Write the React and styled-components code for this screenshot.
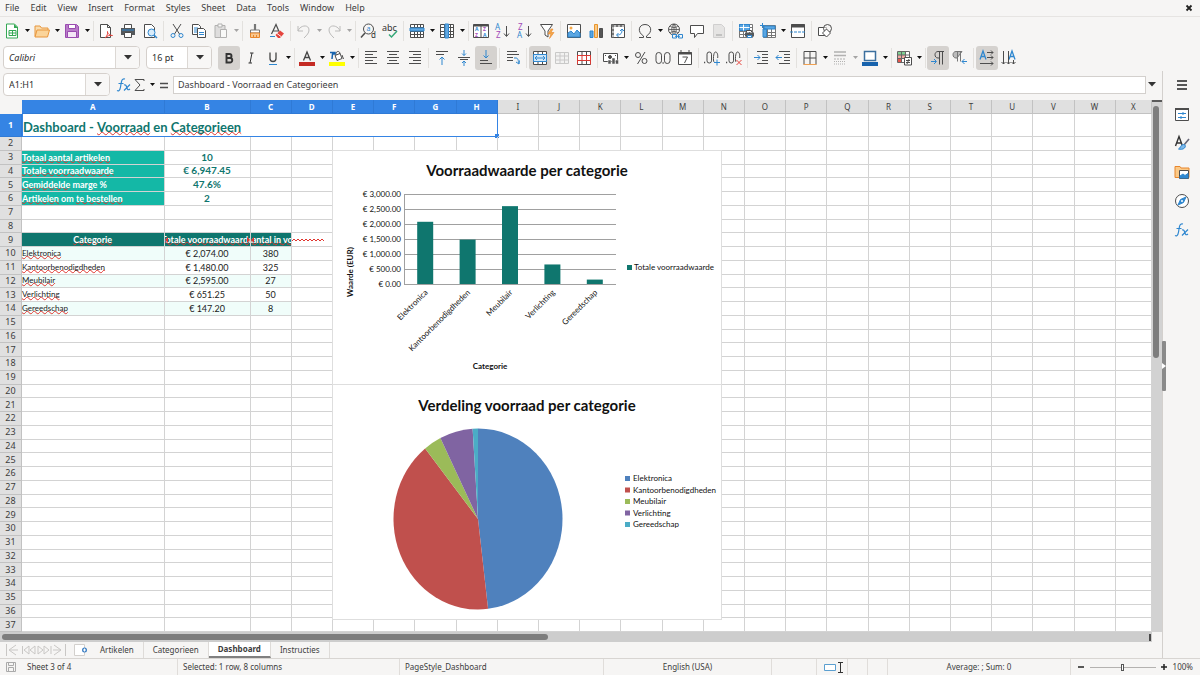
import React from "react";
import styled, { createGlobalStyle, css } from "styled-components";

const UI_FONT = '"Noto Sans", "Open Sans", sans-serif';
const CELL_FONT = 'Lato, "Open Sans", sans-serif';
const BLUE = "#3584e4";
const TEAL = "#0f766e";
const INK = "#3d3d3d";

const GlobalStyle = createGlobalStyle`
  *, *::before, *::after { box-sizing: border-box; }
  body { margin: 0; background: #f6f5f4; }
  button, input { font: inherit; color: inherit; margin: 0; padding: 0; border: 0; background: none; }
`;

const App$ = styled.div`
  display: flex;
  flex-direction: column;
  height: 100vh;
  overflow: hidden;
  background: #f6f5f4;
  color: ${INK};
  font: 9px/12px ${UI_FONT};
`;

/* ---------- menu bar ---------- */
const MenuBar = styled.nav`
  display: flex;
  align-items: center;
  height: 17px;
  flex: none;
  border-bottom: 1px solid #e6e4e2;
`;
const MenuItem = styled.button`
  padding: 0 6px 0 5px;
`;
const CloseButton = styled.button`
  display: flex;
  margin-left: auto;
  padding: 0 6px;
`;

/* ---------- toolbars ---------- */
const Toolbar = styled.div`
  display: flex;
  align-items: center;
  height: 27px;
  flex: none;
  padding-left: ${(p) => p.$inset || 1}px;
`;
const Tool = styled.button`
  display: flex;
  align-items: center;
  justify-content: center;
  flex: none;
  width: ${(p) => (p.$narrow ? 16 : 22)}px;
  height: 24px;
  border-radius: 3px;
  background: ${(p) => (p.$active ? "#d5d2cf" : "transparent")};
  opacity: ${(p) => (p.disabled ? 0.4 : 1)};
`;
const ArrowButton = styled.button`
  display: flex;
  align-items: center;
  justify-content: center;
  flex: none;
  width: 8px;
  height: 24px;
  opacity: ${(p) => (p.disabled ? 0.35 : 1)};
`;
const Separator = styled.span`
  flex: none;
  width: 5px;
  height: 20px;
  background: linear-gradient(#e3e1de, #e3e1de) center / 1px 100% no-repeat;
  ${ArrowButton} + & { width: 4px; }
`;
const Combo = styled.div`
  display: flex;
  flex: none;
  width: ${(p) => p.$width}px;
  height: 23px;
  margin-right: 6px;
  border: 1px solid #d5d0cc;
  border-radius: 4px;
  background: #fff;
  overflow: hidden;
`;
const ComboInput = styled.input`
  flex: 1;
  min-width: 0;
  padding-left: 5px;
  color: #2e2e2e;
  font-style: ${(p) => (p.$italic ? "italic" : "normal")};
`;
const ComboButton = styled.button`
  display: flex;
  align-items: center;
  justify-content: center;
  width: 24px;
  border-left: 1px solid #dcd8d4;
  background: #f8f7f6;
`;

/* ---------- body ---------- */
const Body = styled.div`
  display: flex;
  flex: 1;
  min-height: 0;
`;
const Main = styled.main`
  display: flex;
  flex-direction: column;
  flex: 1;
  min-width: 0;
`;
const FormulaBar = styled.div`
  display: flex;
  align-items: center;
  flex: none;
  height: 29px;
  padding: 0 6px 2px 3px;
`;
const FormulaInput = styled.input`
  flex: 1;
  min-width: 0;
  height: 18px;
  margin: 0 2px 0 1px;
  padding-left: 4px;
  border: 1px solid #d3d0cd;
  background: #fff;
`;
const SheetArea = styled.div`
  display: grid;
  grid-template: minmax(0, 1fr) 10px / minmax(0, 1fr) 10px;
  flex: 1;
  min-height: 0;
`;
const SheetPane = styled.div`
  position: relative;
  overflow: hidden;
  background: #fff;
`;
const VScroll = styled.div`
  padding: 4px 3px 0 1px;
  background: #d2d2d2;
  border-top: 2px solid #5a5a5a;
`;
const VThumb = styled.div`
  width: 6px;
  height: 48%;
  border-radius: 3px;
  background: #7d7d7d;
`;
const HScroll = styled.div`
  display: flex;
  align-items: center;
  justify-content: space-between;
  padding: 0 1px 0 2px;
  background: #cdcdcd;
`;
const HThumb = styled.div`
  width: 47.5%;
  height: 6px;
  border-radius: 3px;
  background: #7d7d7d;
`;
const ScrollMark = styled.div`
  width: 2px;
  height: 7px;
  background: #4a4a4a;
`;

/* ---------- spreadsheet grid ---------- */
const Table = styled.table`
  display: grid;
  grid-template-rows: 14px minmax(0, 1fr);
  height: 100%;
`;
const Head = styled.thead`
  display: grid;
`;
const Rows = styled.tbody`
  display: grid;
  min-height: 0;
  grid-template-rows: 23px repeat(36, minmax(0, 1fr));
`;
const Row = styled.tr`
  display: grid;
  min-height: 0;
  grid-template-columns: 22px 1425fr 860fr repeat(21, 412fr) 363fr;
`;
const HeaderCell = styled.th`
  display: flex;
  align-items: center;
  justify-content: center;
  min-width: 0;
  padding: 0;
  overflow: hidden;
  border-right: 1px solid #c2c2c2;
  border-bottom: 1px solid #c2c2c2;
  background: #e0e0e0;
  font-size: ${(p) => (p.$row ? 9 : 8)}px;
  line-height: 10px;
  font-weight: 400;
  ${(p) => p.$active && css`
    background: ${BLUE};
    border-color: #2f7ad6;
    color: #fff;
    font-weight: 700;
  `}
`;
const Corner = styled.td`
  background: #f6f5f4;
`;
const looks = {
  label: css`background: #14b8a6; color: #fff; font-weight: 700; font-size: 9px;`,
  metric: css`color: ${TEAL}; font-weight: 700; font-size: 10px; justify-content: center;`,
  heading: css`background: ${TEAL}; color: #fff; font-weight: 700; justify-content: center; overflow: hidden;`,
  overflow: css`background: ${TEAL}; color: #fff; font-weight: 700; text-indent: -5px; overflow: hidden;`,
  name: css`font-size: 8px;`,
};
const Cell = styled.td`
  position: relative;
  display: flex;
  align-items: center;
  min-width: 0;
  min-height: 0;
  padding: 0;
  border-right: 1px solid #d3d3d3;
  border-bottom: 1px solid #d3d3d3;
  color: #1a1a1a;
  font: 9px/11px ${CELL_FONT};
  white-space: nowrap;
  ${(p) => p.$band && css`background: #f0fdfa;`}
  ${(p) => p.$center && css`justify-content: center;`}
  ${(p) => p.$look && looks[p.$look]}
`;
const TitleCell = styled(Cell)`
  grid-column: span 8;
  border: solid ${BLUE};
  border-width: 0 1px 1px;
  color: ${TEAL};
  font: 700 13px/16px ${CELL_FONT};
  padding-top: 4px;
  white-space: pre;
`;
const FillHandle = styled.span`
  position: absolute;
  right: -2px;
  bottom: -2px;
  width: 4px;
  height: 4px;
  background: ${BLUE};
`;
const Misspelt = styled.span`
  text-decoration: underline wavy #e0352f 1px;
  text-underline-offset: ${(p) => (p.$tight ? -2 : -1)}px;
  text-decoration-skip-ink: none;
`;
const Clip = styled.span`
  position: absolute;
  top: 4px;
  ${(p) => (p.$right ? "right: 0;" : "left: 0;")}
  border: 3px solid transparent;
  border-width: 3px ${(p) => (p.$right ? 0 : 3)}px 3px ${(p) => (p.$right ? 3 : 0)}px;
  border-${(p) => (p.$right ? "left" : "right")}-color: #e0352f;
`;
const Charts = styled.div`
  position: absolute;
  left: 333px;
  top: 51px;
  display: flex;
  flex-direction: column;
`;
const ChartSvg = styled.svg`
  display: block;
  background: #fff;
  outline: 1px solid #dedede;
  font-family: ${CELL_FONT};
  font-size: 8px;
  fill: #111;
`;

/* ---------- sheet tabs, sidebar, status ---------- */
const TabBar = styled.div`
  display: flex;
  align-items: stretch;
  flex: none;
  height: 16px;
  font-size: 8px;
`;
const TabTools = styled.div`
  display: flex;
  align-items: center;
  gap: 6px;
  width: 91px;
  padding-left: 5px;
`;
const TabButton = styled.button`
  padding: 0 9px;
  line-height: 14px;
  border-right: 1px solid #dedbd8;
  ${(p) => p.$active && css`
    background: #fff;
    border-bottom: 2px solid #808080;
    font-weight: 700;
  `}
`;
const Sidebar = styled.aside`
  position: relative;
  display: flex;
  flex-direction: column;
  align-items: center;
  gap: 5px;
  flex: none;
  width: 38px;
  padding-top: 2px;
  border-left: 1px solid #d3d0cd;
`;
const Splitter = styled.div`
  position: absolute;
  left: -1px;
  top: 46%;
  display: flex;
  align-items: center;
  justify-content: center;
  width: 4px;
  height: 50px;
  border-radius: 1px;
  background: #8a8a8a;
`;
const StatusBar = styled.footer`
  display: grid;
  grid-template-columns: 22px 156fr 222fr 204fr 168fr 45fr 31px 20px 20px 183fr 129px;
  flex: none;
  height: 17px;
  border-top: 1px solid #d8d5d2;
  font-size: 8px;
`;
const StatusField = styled.div`
  display: flex;
  align-items: center;
  justify-content: ${(p) => (p.$center ? "center" : "flex-start")};
  padding-left: ${(p) => (p.$center ? 0 : 5)}px;
  border-right: 1px solid ${(p) => (p.$plain ? "transparent" : "#e0ddda")};
`;
const ZoomField = styled.div`
  display: flex;
  align-items: center;
  justify-content: space-between;
  padding: 0 7px 0 6px;
`;
const ZoomButton = styled.button`
  display: flex;
`;
const ZoomSlider = styled.input`
  appearance: none;
  width: 66px;
  height: 12px;
  background: linear-gradient(#b4b2b0, #b4b2b0) center / 100% 1px no-repeat;
  &::-webkit-slider-thumb {
    appearance: none;
    width: 3px;
    height: 7px;
    border: 1px solid #555;
    background: #fff;
  }
`;

/* ---------- icons ---------- */
const IconSvg = styled.svg`
  display: block;
  overflow: visible;
  font-family: ${UI_FONT};
`;
const Svg = ({ w = 16, h = 16, children }) => (
  <IconSvg width={w} height={h} viewBox={`0 0 ${w} ${h}`} fill="none" stroke="#4d4d4d" strokeWidth="1" aria-hidden="true">
    {children}
  </IconSvg>
);
const Caret = ({ big }) =>
  big ? (
    <svg width="8" height="5" viewBox="0 0 8 5" aria-hidden="true"><path d="M0 0h8L4 4.5z" fill="#333" /></svg>
  ) : (
    <svg width="5" height="3" viewBox="0 0 5 3" aria-hidden="true"><path d="M0 0h5L2.5 3z" fill="#111" /></svg>
  );

const B = "#2f87cf";
const PURPLE = "#a24bb8";
const lines = (rows, extra) => (
  <Svg>
    {rows.map(([x, y, w], i) => <path key={i} d={`M${x} ${y}.5h${w}`} />)}
    {extra}
  </Svg>
);
const gridPath = "M1.5 1.5h13v13h-13zM1.5 4.5h13M1.5 8.5h13M1.5 11.5h13M5.5 1.5v13M8.5 1.5v13M11.5 1.5v13";

const icons = {
  new: <Svg><path d="M2.500 1h8l3 3v11h-11z" fill="#fff" stroke="#35a854" /><path d="M10 1v4h4z" fill="#35a854" stroke="none" /><path d="M5 7.500h7v5H5zM5 10h7M8.500 7.500v5" stroke="#35a854" /></Svg>,
  open: <Svg><path d="M1 13.500V3h5l1.500 2H14v2" fill="#f9dcae" stroke="#e8963c" /><path d="M1 14l2-7h12.500l-2 7z" fill="#fbd49a" stroke="#e8963c" /></Svg>,
  save: <Svg><path d="M1.500 1.500h11l2 2v11h-13z" fill="#b97cc9" stroke="#9a4bb0" /><path d="M4.500 1.500h7v4h-7z" fill="#fff" stroke="#9a4bb0" /><path d="M3.500 8.500h9v6h-9z" fill="#f4e6f7" stroke="#9a4bb0" /></Svg>,
  pdf: <Svg><path d="M2.500 1.500h7l3 3v10h-10z" fill="#fff" /><path d="M9.500 1.500v3h3" /><path d="M7 15c2-2 3-4 2.500-6.500C9 10 12 13 14.500 12.500 12 11.500 9 13 7 15z" stroke="#e5443d" /></Svg>,
  print: <Svg><path d="M4.500 5V1.500h7V5" fill="#fff" /><path d="M1 5h14v7H1z" fill="#55595c" stroke="none" /><path d="M2 7h12" stroke={B} /><path d="M4.500 9.500h7v5h-7z" fill="#fff" /></Svg>,
  preview: <Svg><path d="M2.500 1.500h7l3 3v10h-10z" fill="#fff" /><circle cx="9.500" cy="9.500" r="3.500" fill="#d9ecfa" stroke={B} /><path d="M12 12l3 3" stroke={B} strokeWidth="1.500" /></Svg>,
  cut: <Svg><path d="M4 1l6.500 10M12 1L5.500 11" /><circle cx="4" cy="12.500" r="2" stroke={B} /><circle cx="12" cy="12.500" r="2" stroke={B} /></Svg>,
  copy: <Svg><path d="M1.500 1.500h6l2 2v8h-8z" fill="#fff" /><path d="M3 5h4M3 7h3M3 9h3" stroke={B} /><path d="M6.500 5.500h6l2 2v7h-8z" fill="#fff" /><path d="M8 9.500h5M8 11.500h5" stroke={B} /></Svg>,
  paste: <Svg><path d="M2 2.500h10v12H2z" fill="#bbb" /><path d="M5 1h4v3H5z" fill="#fff" /><path d="M7.500 6.500h6v8h-6z" fill="#fff" /></Svg>,
  brush: <Svg><path d="M8 1v6" strokeWidth="2.200" stroke="#777" /><path d="M3.500 7h9v3h-9z" fill="#fff" stroke="#777" /><path d="M3.500 10h9v4.500h-9zM6.500 12v2.500M9.500 12v2.500" fill="#f9c890" stroke="#e8862c" /></Svg>,
  clear: <Svg><path d="M2.500 11L7 1.500l3 7M4 8h5.500" strokeWidth="1.200" /><path d="M1 13.500h5" stroke={B} /><path d="M6.500 12l4.500-4.500 4 3-4 4.500H9z" fill="#e5443d" stroke="none" /><path d="M8 10.500l4 3" stroke="#f6f5f4" /></Svg>,
  undo: <Svg><path d="M2 3v5h5M2 8c2-6 11-7 11-1 0 3-2 5-5 8" stroke="#666" /></Svg>,
  redo: <Svg><path d="M14 3v5H9M14 8C12 2 3 1 3 7c0 3 2 5 5 8" stroke="#666" /></Svg>,
  find: <Svg><circle cx="8.500" cy="6" r="5" /><path d="M5 10l-4 4.500" strokeWidth="1.500" /><text x="6.500" y="8" fontSize="7" fill={B} stroke="none">a</text><text x="11" y="15" fontSize="8" fill="#333" stroke="none">d</text></Svg>,
  spell: <Svg><text x="0" y="8" fontSize="9" fill="#333" stroke="none">abc</text><path d="M7 11.500l2.500 2.500L15 8" stroke="#35a878" strokeWidth="1.500" /></Svg>,
  row: <Svg><path d={gridPath} fill="#fff" /><path d="M1 5h14v3H1z" fill="#62a8e0" stroke={B} /></Svg>,
  column: <Svg><path d={gridPath} fill="#fff" /><path d="M6 1h3.500v14H6z" fill="#62a8e0" stroke={B} /></Svg>,
  sort: <Svg><path d="M.500 1.500h15v13H.500zM8 1.500v13" fill="#fff" /><path d="M.500 2.500h15" strokeWidth="2" /><g fontSize="5" stroke="none" fontWeight="700"><text x="2" y="8" fill={B}>A</text><text x="2" y="14" fill={PURPLE}>Z</text><text x="10" y="8" fill={PURPLE}>Z</text><text x="10" y="14" fill={B}>A</text></g></Svg>,
  asc: <Svg><g fontSize="8" stroke="none"><text x="0" y="7" fill={B}>A</text><text x="1" y="15" fill={PURPLE}>Z</text></g><path d="M11.500 3v10M9 10.500l2.500 3 2.500-3" /></Svg>,
  desc: <Svg><g fontSize="8" stroke="none"><text x="1" y="7" fill={PURPLE}>Z</text><text x="0" y="15" fill={B}>A</text></g><path d="M11.500 3v10M9 10.500l2.500 3 2.500-3" /></Svg>,
  filter: <Svg><path d="M1.500 1.500h12L9 8v6l-3-2V8z" fill="#fff" /><path d="M12 6l-3 5h3l-1.500 4.500L15 9.500h-3L14 6z" fill="#f6a94a" stroke="#e8862c" strokeWidth=".6" /></Svg>,
  image: <Svg><path d="M1.500 1.500h13v13h-13z" fill="#fff" /><path d="M2 14v-4l3-2 3 3 3-4 3 3v4z" fill="#5aa6e2" stroke={B} /><circle cx="5" cy="5" r="1.500" fill="#f6a94a" stroke="none" /></Svg>,
  chart: <Svg><path d="M2 8h3v6.500H2z" fill="#5aa6e2" stroke={B} /><path d="M6.500 1.500h3v13h-3z" fill="#fbc987" stroke="#e8962c" /><path d="M11.500 5.500h3v9h-3z" fill="#555" /></Svg>,
  pivot: <Svg><path d="M1.500 1.500h13v13h-13z" fill="#fff" /><path d="M1.500 3h13M3 1.500v13" stroke="#777" strokeWidth="2" strokeDasharray="3 1" /><path d="M7 12c4 0 5-2 5-5M10 8l2-2 2 2M8.500 10L6.500 12l2 2" stroke={B} /></Svg>,
  omega: <Svg><path d="M2 14.500h4.500v-1.500C0 9 1.500 1.500 8 1.500S16 9 9.500 13v1.500H14" /></Svg>,
  link: <Svg><circle cx="7" cy="6.500" r="5.500" /><path d="M1.500 6.500h11M7 1v11M3 3c2 2 6 2 8 0M3 10c2-2 6-2 8 0M7 1c-3 3-3 8 0 11M7 1c3 3 3 8 0 11" strokeWidth=".8" /><path d="M5.500 11.500h4v3.500h-4zM11.500 11.500h4v3.500h-4zM8 13.300h5" fill="#f6f5f4" stroke={B} /></Svg>,
  comment: <Svg><path d="M1.500 2.500h13v8H8.500l-3 4v-4h-4z" fill="#fff" /></Svg>,
  headfoot: <Svg><path d="M2.500 1.500h8l3 3v10h-11z" fill="#ccc" stroke="#999" /><path d="M5 12h6" stroke="#777" strokeWidth="2" /></Svg>,
  printarea: <Svg><path d={gridPath} fill="#fff" stroke="#777" /><path d="M1.500 1.500h10v6h-10z" fill="#5aa6e2" stroke={B} /><path d="M1.500 4.500h10M5.500 1.500v6" stroke="#fff" /><path d="M8.500 9V7.500h5V9" fill="#fff" /><path d="M7 9.500h9v4H7z" fill="#55595c" stroke="none" /><path d="M9.500 12.500h4v2h-4z" fill="#fff" stroke={B} /></Svg>,
  freeze: <Svg><path d="M3.500 2.500h12v12h-12zM3.500 9.500h12M3.500 12.500h12M7.500 2.500v12M11.500 2.500v12" fill="#fff" stroke="#777" /><path d="M4 3h11v3H4zM3 6h3.500v8H3z" fill="#5aa6e2" stroke={B} /><path d="M0 2.500h5M2.500 0v5" stroke={B} /></Svg>,
  split: <Svg><path d="M1.500 1.500h13v13h-13z" fill="#fff" /><path d="M1 3h14" strokeWidth="3" /><path d="M0 9h16" stroke={B} strokeDasharray="3 1" /></Svg>,
  shapes: <Svg><path d="M1.500 4.500h8v8h-8z" fill="#fff" /><circle cx="10.500" cy="5.500" r="4" fill="#f6f5f4" fillOpacity=".6" /><path d="M9.500 6l4 4-4 4-4-4z" fill="#fff" /></Svg>,

  bold: <Svg><path d="M5.500 4h3a2 2 0 010 4h-3zM5.500 8h3.500a2.200 2.200 0 010 4.500H5.500z" strokeWidth="1.900" stroke="#333" /></Svg>,
  italic: <Svg><path d="M7 3h3.500M5.500 13H9M9 3l-2 10" stroke="#333" /></Svg>,
  underline: <Svg><path d="M5 2.500v6c0 4 6 4 6 0v-6" strokeWidth="1.300" stroke="#444" /><path d="M4 14.500h8" stroke={B} /></Svg>,
  fontcolor: <Svg><path d="M4.500 10.500L8 2l3.500 8.500M5.500 7.500h5" strokeWidth="1.300" stroke="#444" /><path d="M0 12h16v4H0z" fill="#c42b24" stroke="none" /></Svg>,
  highlight: <Svg><path d="M6 5.500l5-2 2 5-5 2z" fill="#fff" /><path d="M7 5c-1-4 4-5 4-1M13 5l1.500 4" /><path d="M1 2.500h5v1.500H3.500L3 9" stroke="#1763ad" strokeWidth="1.500" /><path d="M0 12h16v4H0z" fill="#ffff00" stroke="none" /></Svg>,
  left: lines([[2, 1, 12], [2, 4, 8], [2, 7, 12], [2, 10, 8], [2, 13, 12]]),
  center: lines([[2, 1, 12], [4, 4, 8], [2, 7, 12], [4, 10, 8], [2, 13, 12]]),
  right: lines([[2, 1, 12], [6, 4, 8], [2, 7, 12], [6, 10, 8], [2, 13, 12]]),
  top: lines([[2, 1, 12], [2, 4, 8]], <path d="M8 15V7M5.500 9.500L8 7l2.500 2.500" stroke={B} />),
  middle: lines([[2, 7, 12], [4, 9, 8]], <path d="M8 0v5.500M6 3.500l2 2 2-2M8 16v-5M6 13l2-2 2 2" stroke={B} />),
  bottom: lines([[2, 10, 8], [2, 13, 12]], <path d="M8 0v8M5.500 5.500L8 8l2.500-2.500" stroke={B} />),
  wrap: lines([[2, 1, 10], [2, 4, 12], [2, 7, 6], [2, 10, 6]], <path d="M9 8h2c3 0 2 5 3 5.500M11 12l3 2 .5-3.500" stroke={B} />),
  merge: <Svg><path d="M1.500 1.500h13v13h-13zM6 1.500v3M10.500 1.500v3M6 11.500v3M10.500 11.500v3" fill="#fff" /><path d="M1.500 4.500h13v7h-13z" fill="#cfe6f8" stroke={B} /><path d="M3 8h10M5 6L3 8l2 2M11 6l2 2-2 2" stroke={B} /></Svg>,
  mergeOnly: <Svg><path d="M1.500 2.500h13v11h-13zM1.500 6h13M1.500 10h13M6 2.500v11M10.500 2.500v11" fill="#eee" stroke="#888" /></Svg>,
  unmerge: <Svg><path d="M1.500 1.500h13v13h-13zM6 1.500v4M10.500 1.500v4M6 11v3.500M10.500 11v3.500" fill="#fff" /><path d="M1.500 5.500h13v5h-13zM6 5.500v5M10.500 5.500v5M1.500 5v9.500M14.500 5v9.500" stroke="#d93a34" /></Svg>,
  currency: <Svg><path d="M.500 3.500h14v8H.500z" fill="#fff" /><circle cx="7" cy="7" r="1.500" fill="#4d4d4d" /><path d="M2 5.500h1M12 5.500h1" /><path d="M5 10h3v4H5zM9 8h3v6H9zM12.500 10h3v4h-3z" fill="#555" stroke="#f6f5f4" strokeWidth=".5" /></Svg>,
  percent: <Svg><circle cx="5" cy="5" r="2.500" /><circle cx="11.500" cy="11" r="2.500" /><path d="M12 2L4.500 14" /></Svg>,
  number: <Svg><rect x="1" y="2.500" width="5.500" height="11" rx="2.700" /><rect x="9.500" y="2.500" width="5.500" height="11" rx="2.700" /><path d="M7.500 13h1.200" strokeWidth="1.300" /></Svg>,
  date: <Svg><path d="M1.500 2.500h13v12h-13z" fill="#fff" /><path d="M1 3.500h14" strokeWidth="2" /><path d="M4 0v3M12 0v3M5.500 7h5L7.500 13" /></Svg>,
  addDec: <Svg><path d="M0 12.500h1.200" strokeWidth="1.300" /><rect x="3" y="2" width="4.500" height="11" rx="2.200" /><path d="M10 12c-1-1-.8-10 1.500-10 2 0 2.500 3 2.200 6" /><path d="M13 9.500v6M10 12.500h6" stroke={B} /></Svg>,
  delDec: <Svg><path d="M0 12.500h1.200" strokeWidth="1.300" /><rect x="3" y="2" width="4.500" height="11" rx="2.200" /><path d="M10 12c-1-1-.8-10 1.500-10 2 0 2.500 3 2.200 6" /><path d="M10.500 10l5 5M15.500 10l-5 5" stroke="#e5443d" /></Svg>,
  indent: lines([[4, 1, 11], [9, 4, 6], [9, 7, 6], [9, 10, 6], [4, 13, 11]], <path d="M1 7.500h6M4.500 5L7 7.500 4.500 10" stroke={B} />),
  outdent: lines([[4, 1, 11], [9, 4, 6], [9, 7, 6], [9, 10, 6], [4, 13, 11]], <path d="M1 7.500h6M3.500 5L1 7.500 3.500 10" stroke={B} />),
  border: <Svg><path d="M2 1.500v13M14 1.500v13M8 1.500v13M2 1.500h12M2 8h12" /><path d="M1.500 14.500h13" stroke="#f0a050" /></Svg>,
  linestyle: <Svg><path d="M2 2h12M2 5.500h12" strokeWidth="1.500" /><path d="M2 9h12" strokeDasharray="2 1" /><path d="M2 11.500h12M2 14h12" strokeDasharray="1 1" /></Svg>,
  bordercolor: <Svg><path d="M2.500 1.500h11v9h-11z" fill="#fff" strokeWidth="1.500" stroke="#3b6f9e" /><path d="M0 12h16v4H0z" fill="#1763ad" stroke="none" /></Svg>,
  condition: <Svg><path d="M1.500 1.500h12v11h-12z" fill="#fff" stroke="none" /><path d="M2 2h7v3H2z" fill="#7fce92" stroke="none" /><path d="M2 5h7v3.500H2z" fill="#f0a9a4" stroke="none" /><path d="M2 8.500h4v4H2z" fill="#e5554d" stroke="none" /><path d="M1.500 1.500h12v11h-12zM1.500 5h12M1.500 8.500h12M5.500 1.500v11M9.500 1.500v11" stroke="#666" /><path d="M8.500 7.500h7v7.500h-7z" fill="#fff" /><path d="M10 10.500h4M10 12.500h4M13 9l-2 5" /></Svg>,
  ltr: <Svg><path d="M14 1.500H8C4 1.500 4 8 8 8h1M9.500 1.500v13M12.500 1.500v13" /><path d="M1 11.500h5M4 9l2.500 2.500L4 14" stroke={B} /></Svg>,
  rtl: <Svg><path d="M10 1.500H4C0 1.500 0 8 4 8h1z" fill="#bbb" stroke="#777" /><path d="M5.500 1.500v10M8.500 1.500v10" stroke="#777" /><path d="M15 11.500h-5M12.500 9L10 11.500l2.500 2.500" stroke={B} /></Svg>,
  textltr: <Svg><path d="M1 9.500L4 1l3 8.500M2 6.500h4" stroke={B} strokeWidth="1.300" /><path d="M8 2.500h6M12 .5l2 2-2 2M8 7.500h6M12 5.500l2 2-2 2M1 13.500h13M12 11.500l2 2-2 2" /></Svg>,
  texttb: <Svg><path d="M8 9.500L11 1l3 8.500M9 6.500h4" stroke={B} strokeWidth="1.300" /><path d="M2.500 1v13M.5 12l2 2 2-2M7.500 1v13M5.500 12l2 2 2-2M12.500 10v4M10.500 12l2 2 2-2" /></Svg>,

  fx: <Svg><path d="M9 2c-3-1-3.500 2-4 5-.500 4-1 8-4 6.500M2.500 6.500h5M8 8c2-1 2.500 1.500 3 3s1 2.500 3 1M14 7.500L8 13.500" stroke={B} strokeWidth="1.200" /></Svg>,
  sigma: <Svg><path d="M12 4V2.500H3L8 8l-5 5.500h9V12" /></Svg>,
  equals: <Svg><path d="M4 6.500h8M4 10.500h8" strokeWidth="1.300" /></Svg>,
  menu: <Svg><path d="M3 4h10M3 8h10M3 12h10" strokeWidth="1.300" stroke="#222" /></Svg>,
  properties: <Svg><path d="M1.500 2.500h13v12h-13z" fill="#fff" /><path d="M1 3h14" strokeWidth="2" /><path d="M4 7.500h8M4 11.500h8M9 6v3M7 10v3" stroke={B} /></Svg>,
  styles: <Svg><path d="M1.500 11L5 1.500 8.500 11M3 8h4.500" strokeWidth="1.400" stroke="#333" /><path d="M15 4l-5 6" strokeWidth="1.600" stroke="#667" /><path d="M9.500 9.500c2 0 2.500 2 1 3.500-1.500 1.500-4 1.500-6 1 2-.500 2-4.500 5-4.500z" fill="#7db9ea" stroke={B} /></Svg>,
  gallery: <Svg><path d="M1 13.500V2.500h5l1 1.500h8v9.500z" fill="#fbc987" stroke="#e8862c" /><path d="M5.500 6.500h9v8h-9z" fill="#fff" /><path d="M6 14v-2l3-2 2 1.500 3-2V14z" fill={B} stroke={B} /></Svg>,
  navigator: <Svg><circle cx="8" cy="8" r="6.500" fill="#fff" /><path d="M12 4L9.500 9.500 4 12l2.500-5.500z" fill={B} stroke={B} /><circle cx="8" cy="8" r="1" fill="#fff" stroke="none" /></Svg>,
};

const FILE_TOOLS = [
  ["new", "New", 1], ["open", "Open", 1], ["save", "Save", 1], "|",
  ["pdf", "Export as PDF"], ["print", "Print"], ["preview", "Print preview"], "|",
  ["cut", "Cut"], ["copy", "Copy"], ["paste", "Paste", 1, "off"], "|",
  ["brush", "Clone formatting"], ["clear", "Clear formatting"], "|",
  ["undo", "Undo", 1, "off"], ["redo", "Redo", 1, "off"], "|",
  ["find", "Find and replace"], ["spell", "Spelling"], "|",
  ["row", "Row", 1], ["column", "Column", 1], "|",
  ["sort", "Sort"], ["asc", "Sort ascending"], ["desc", "Sort descending"], ["filter", "AutoFilter"], "|",
  ["image", "Insert image"], ["chart", "Insert chart"], ["pivot", "Pivot table"], "|",
  ["omega", "Special character", 1], ["link", "Hyperlink"], ["comment", "Comment"], ["headfoot", "Headers and footers", 0, "off"], "|",
  ["printarea", "Print area"], ["freeze", "Freeze rows and columns", 1], ["split", "Split window"], "|",
  ["shapes", "Draw functions"],
];
const FORMAT_TOOLS = [
  ["bold", "Bold", 0, "on"], ["italic", "Italic"], ["underline", "Underline", 1], "|",
  ["fontcolor", "Font color", 1], ["highlight", "Background color", 1], "|",
  ["left", "Align left"], ["center", "Center"], ["right", "Align right"], "|",
  ["top", "Align top"], ["middle", "Center vertically"], ["bottom", "Align bottom", 0, "on"], "|",
  ["wrap", "Wrap text"], "|",
  ["merge", "Merge and center", 0, "on"], ["mergeOnly", "Merge cells", 0, "off"], ["unmerge", "Unmerge cells"], "|",
  ["currency", "Currency", 1], ["percent", "Percent"], ["number", "Number"], ["date", "Date"], "|",
  ["addDec", "Add decimal place"], ["delDec", "Delete decimal place"], "|",
  ["indent", "Increase indent"], ["outdent", "Decrease indent"], "|",
  ["border", "Borders", 1], ["linestyle", "Border style", 1, "off"], ["bordercolor", "Border color", 1], "|",
  ["condition", "Conditional formatting", 1], "|",
  ["ltr", "Left-to-right", 0, "on"], ["rtl", "Right-to-left"], "|",
  ["textltr", "Horizontal text", 0, "on"], ["texttb", "Vertical text"],
];

const Tools = ({ items }) =>
  items.map((item, i) => {
    if (item === "|") return <Separator key={i} />;
    const [name, label, menu, state] = item;
    return (
      <React.Fragment key={i}>
        <Tool aria-label={label} $active={state === "on"} disabled={state === "off"}>{icons[name]}</Tool>
        {menu ? <ArrowButton aria-label={`${label} options`} disabled={state === "off"}><Caret /></ArrowButton> : null}
      </React.Fragment>
    );
  });

const ComboBox = ({ label, value, width, italic }) => (
  <Combo $width={width}>
    <ComboInput aria-label={label} defaultValue={value} $italic={italic} />
    <ComboButton aria-label={`${label} list`}><Caret big /></ComboButton>
  </Combo>
);

/* ---------- sheet contents ---------- */
const CATEGORIES = [
  { name: "Elektronica", value: 2074, text: "€ 2,074.00", count: 380, color: "#4f81bd" },
  { name: "Kantoorbenodigdheden", value: 1480, text: "€ 1,480.00", count: 325, color: "#c0504d" },
  { name: "Meubilair", value: 2595, text: "€ 2,595.00", count: 27, color: "#9bbb59" },
  { name: "Verlichting", value: 651.25, text: "€ 651.25", count: 50, color: "#8064a2" },
  { name: "Gereedschap", value: 147.2, text: "€ 147.20", count: 8, color: "#4bacc6" },
];
const M = Misspelt;
const METRICS = [
  [<M $tight>Totaal aantal artikelen</M>, "10"],
  [<M $tight>Totale voorraadwaarde</M>, "€ 6,947.45"],
  [<><M $tight>Gemiddelde</M>&nbsp;marge %</>, "47.6%"],
  [<><M $tight>Artikelen</M>&nbsp;om&nbsp;<M $tight>te bestellen</M></>, "2"],
];
const COLUMNS = "ABCDEFGHIJKLMNOPQRSTUVWX".split("");

const Blank = ({ count }) => Array.from({ length: count }, (_, i) => <Cell key={i} />);

const rowCells = (n) => {
  if (n === 1)
    return (
      <>
        <TitleCell colSpan={8}>Dashboard - <M>Voorraad</M> en <M>Categorieen</M><FillHandle /></TitleCell>
        <Blank count={16} />
      </>
    );
  if (n >= 3 && n <= 6) {
    const [label, value] = METRICS[n - 3];
    return (
      <>
        <Cell $look="label">{label}</Cell>
        <Cell $look="metric">{value}</Cell>
        <Blank count={22} />
      </>
    );
  }
  if (n === 9)
    return (
      <>
        <Cell $look="heading"><M $tight>Categorie</M></Cell>
        <Cell $look="heading"><M $tight>Totale voorraadwaarde</M><Clip /><Clip $right /></Cell>
        <Cell $look="overflow"><M $tight>Aantal in voorraad</M><Clip /></Cell>
        <Cell>
          <svg width="32" height="4" viewBox="0 0 32 4" fill="none" stroke="#e0352f" aria-hidden="true">
            <path d="M0 3l2-2 2 2 2-2 2 2 2-2 2 2 2-2 2 2 2-2 2 2 2-2 2 2 2-2 2 2 2-2 2 2" />
          </svg>
        </Cell>
        <Blank count={20} />
      </>
    );
  if (n >= 10 && n <= 14) {
    const c = CATEGORIES[n - 10];
    const band = n % 2 === 0;
    return (
      <>
        <Cell $band={band} $look="name"><M>{c.name}</M></Cell>
        <Cell $band={band} $center>{c.text}</Cell>
        <Cell $band={band} $center>{c.count}</Cell>
        <Blank count={21} />
      </>
    );
  }
  return <Blank count={24} />;
};

const Sheet = () => (
  <Table>
    <Head>
      <Row>
        <Corner />
        {COLUMNS.map((c, i) => <HeaderCell key={c} scope="col" $active={i < 8}>{c}</HeaderCell>)}
      </Row>
    </Head>
    <Rows>
      {Array.from({ length: 37 }, (_, i) => (
        <Row key={i}>
          <HeaderCell scope="row" $row $active={i === 0}>{i + 1}</HeaderCell>
          {rowCells(i + 1)}
        </Row>
      ))}
    </Rows>
  </Table>
);

const BarChart = () => {
  const x0 = 71, y0 = 133, step = 42.4, scale = 90 / 3000;
  const ticks = ["€ 0.00", "€ 500.00", "€ 1,000.00", "€ 1,500.00", "€ 2,000.00", "€ 2,500.00", "€ 3,000.00"];
  return (
    <ChartSvg width="388" height="234" viewBox="0 0 388 234">
      <text x="194" y="25" textAnchor="middle" fontSize="15" fontWeight="700">Voorraadwaarde per categorie</text>
      {ticks.map((t, i) => (
        <g key={t}>
          <path d={`M${x0} ${y0 - i * 15 + 0.5}h212`} stroke="#a0a0a0" />
          <text x="68" y={y0 - i * 15 + 3} textAnchor="end">{t}</text>
        </g>
      ))}
      <path d="M71.500 43v90" stroke="#a0a0a0" />
      {CATEGORIES.map((c, i) => {
        const cx = x0 + step * (i + 0.5);
        return (
          <g key={c.name}>
            <rect x={cx - 8} y={y0 - c.value * scale} width="16" height={c.value * scale} fill={TEAL} />
            <text transform={`translate(${cx + 3} 142) rotate(-45)`} textAnchor="end">{c.name}</text>
          </g>
        );
      })}
      <text transform="translate(20 121) rotate(-90)" textAnchor="middle" fontWeight="700">Waarde (EUR)</text>
      <text x="157" y="218" textAnchor="middle" fontWeight="700">Categorie</text>
      <rect x="294" y="114" width="5" height="5" fill={TEAL} />
      <text x="301" y="119">Totale voorraadwaarde</text>
    </ChartSvg>
  );
};

const PieChart = () => {
  const cx = 145, cy = 134, rx = 84.5, ry = 90.5;
  const total = CATEGORIES.reduce((s, c) => s + c.count, 0);
  const at = (f) => `${cx + rx * Math.sin(f * 2 * Math.PI)} ${cy - ry * Math.cos(f * 2 * Math.PI)}`;
  let from = 0;
  return (
    <ChartSvg width="388" height="234" viewBox="0 0 388 234">
      <text x="194" y="26" textAnchor="middle" fontSize="15" fontWeight="700">Verdeling voorraad per categorie</text>
      {CATEGORIES.map((c, i) => {
        const start = from;
        from += c.count / total;
        return (
          <g key={c.name}>
            <path d={`M${cx} ${cy}L${at(start)}A${rx} ${ry} 0 0 1 ${at(from)}z`} fill={c.color} />
            <rect x="292" y={91 + i * 11.5} width="5" height="5" fill={c.color} />
            <text x="300" y={96 + i * 11.5}>{c.name}</text>
          </g>
        );
      })}
    </ChartSvg>
  );
};

export default function App() {
  return (
    <App$>
      <GlobalStyle />
      <MenuBar aria-label="Main menu">
        {["File", "Edit", "View", "Insert", "Format", "Styles", "Sheet", "Data", "Tools", "Window", "Help"].map((m) => (
          <MenuItem key={m}>{m}</MenuItem>
        ))}
        <CloseButton aria-label="Close document">
          <Svg w={10} h={10}><path d="M2.500 2.500l5 5M7.500 2.500l-5 5" strokeWidth="1.800" stroke="#222" /></Svg>
        </CloseButton>
      </MenuBar>
      <Toolbar role="toolbar" aria-label="Standard"><Tools items={FILE_TOOLS} /></Toolbar>
      <Toolbar role="toolbar" aria-label="Formatting" $inset={3}>
        <ComboBox label="Font name" value="Calibri" width={137} italic />
        <ComboBox label="Font size" value="16 pt" width={66} />
        <Tools items={FORMAT_TOOLS} />
      </Toolbar>
      <Body>
        <Main>
          <FormulaBar>
            <ComboBox label="Name box" value="A1:H1" width={107} />
            <Tool $narrow aria-label="Function wizard">{icons.fx}</Tool>
            <Tool $narrow aria-label="Select function">{icons.sigma}</Tool>
            <ArrowButton aria-label="Function list"><Caret /></ArrowButton>
            <Tool $narrow aria-label="Formula">{icons.equals}</Tool>
            <FormulaInput aria-label="Input line" defaultValue="Dashboard - Voorraad en Categorieen" />
            <ArrowButton aria-label="Expand formula bar"><Caret big /></ArrowButton>
          </FormulaBar>
          <SheetArea>
            <SheetPane>
              <Sheet />
              <Charts><BarChart /><PieChart /></Charts>
            </SheetPane>
            <VScroll><VThumb /></VScroll>
            <HScroll><HThumb /><ScrollMark /></HScroll>
          </SheetArea>
          <TabBar role="tablist">
            <TabTools>
              <svg width="62" height="12" viewBox="0 0 62 12" fill="none" stroke="#c9c7c5" aria-hidden="true">
                <path d="M1.500 0v12M11 1L4 6l7 5M5 6h8M17.500 2v8M24 2l-5 4 5 4zM30 2l-5 4 5 4zM33 2l5 4-5 4zM39 2l5 4-5 4zM46 2v8M49 1l7 5-7 5M48 6h8M60.500 0v12" />
              </svg>
              <svg width="14" height="14" viewBox="0 0 14 14" aria-hidden="true">
                <path d="M1.500 1.500h10v11h-10z" fill="#fff" stroke="#d3d0cd" />
                <circle cx="11.500" cy="7" r="2.500" fill="#3b7fc4" />
                <path d="M11.500 5.500v3M10 7h3" stroke="#fff" />
              </svg>
            </TabTools>
            <TabButton role="tab">Artikelen</TabButton>
            <TabButton role="tab">Categorieen</TabButton>
            <TabButton role="tab" aria-selected="true" $active>Dashboard</TabButton>
            <TabButton role="tab">Instructies</TabButton>
          </TabBar>
        </Main>
        <Sidebar>
          <Tool aria-label="Sidebar settings">{icons.menu}</Tool>
          <Tool aria-label="Properties">{icons.properties}</Tool>
          <Tool aria-label="Styles">{icons.styles}</Tool>
          <Tool aria-label="Gallery">{icons.gallery}</Tool>
          <Tool aria-label="Navigator">{icons.navigator}</Tool>
          <Tool aria-label="Functions">{icons.fx}</Tool>
          <Splitter><svg width="4" height="6" viewBox="0 0 4 6" aria-hidden="true"><path d="M0 0l4 3-4 3z" fill="#fff" /></svg></Splitter>
        </Sidebar>
      </Body>
      <StatusBar>
        <StatusField $center $plain>
          <Svg w={12} h={12}><path d="M1.500 1.500h9v9h-9zM3.500 1.500v3h5v-3M3.500 10.500v-4h5v4" stroke="#aaa" /></Svg>
        </StatusField>
        <StatusField>Sheet 3 of 4</StatusField>
        <StatusField>Selected: 1 row, 8 columns</StatusField>
        <StatusField>PageStyle_Dashboard</StatusField>
        <StatusField $center>English (USA)</StatusField>
        <StatusField />
        <StatusField>
          <Svg w={20} h={12}><path d="M2.500 3.500h11v6h-11z" stroke="#5b9fd0" fill="#fff" /><path d="M16 1.500h5M18.500 1.500v10M16 11.500h5" stroke="#333" /></Svg>
        </StatusField>
        <StatusField />
        <StatusField />
        <StatusField $center>Average: ; Sum: 0</StatusField>
        <ZoomField>
          <ZoomButton aria-label="Zoom out"><Svg w={8} h={8}><path d="M1 4h6" stroke="#222" strokeWidth="1.500" /></Svg></ZoomButton>
          <ZoomSlider type="range" aria-label="Zoom" min="0" max="100" defaultValue="50" />
          <ZoomButton aria-label="Zoom in"><Svg w={8} h={8}><path d="M1 4h6M4 1v6" stroke="#222" strokeWidth="1.500" /></Svg></ZoomButton>
          <span>100%</span>
        </ZoomField>
      </StatusBar>
    </App$>
  );
}
